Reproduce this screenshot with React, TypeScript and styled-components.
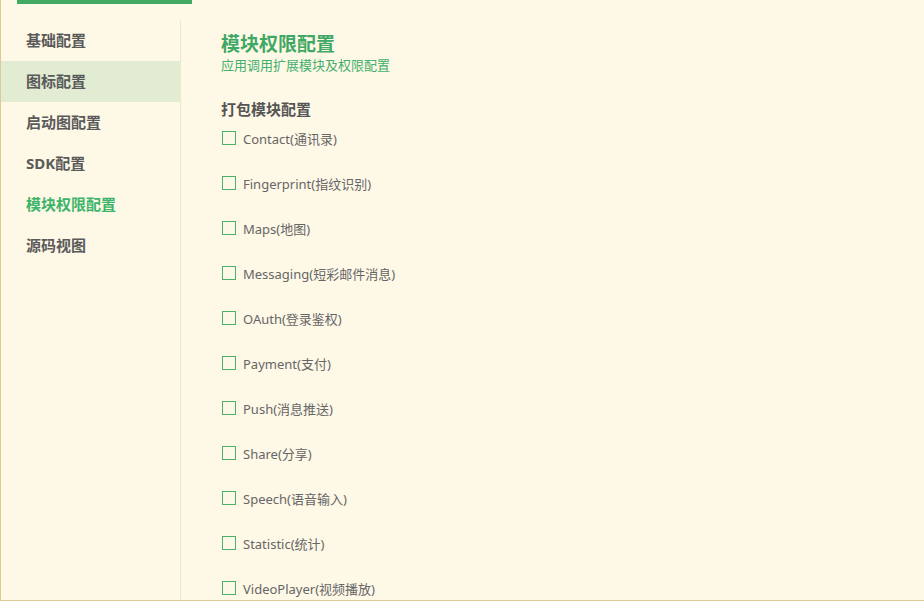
import React from "react";
import styled, { createGlobalStyle } from "styled-components";

const Global = createGlobalStyle`
  html, body { margin: 0; padding: 0; background: #fef8e6; }
  body { font-family: "Noto Sans", "Noto Sans CJK SC", sans-serif; }
  * { box-sizing: border-box; }
`;

const Page = styled.div`
  height: 601px;
  overflow: hidden;
  border-left: 1px solid #dccb93;
  border-bottom: 1px solid #dccb93;
  background: #fef8e6;
  display: flex;
  flex-direction: column;
`;

const TopBar = styled.div`
  height: 4px;
  overflow: hidden;
  display: flex;
  align-items: flex-end;
  padding-left: 16px;
  gap: 60px;
  flex-shrink: 0;
`;

const Tab = styled.div<{ $active?: boolean }>`
  width: ${(p) => (p.$active ? "175px" : "auto")};
  height: 30px;
  padding-top: 6px;
  line-height: 20px;
  font-size: 14px;
  text-align: center;
  color: ${(p) => (p.$active ? "#ffffff" : "#3daa66")};
  background: ${(p) => (p.$active ? "#42aa62" : "transparent")};
`;

const Body = styled.div`
  flex: 1;
  display: flex;
  margin-top: 16px;
  min-height: 0;
`;

const Sidebar = styled.nav`
  width: 180px;
  flex-shrink: 0;
  border-right: 1px solid #f1e6c6;
  display: flex;
  flex-direction: column;
`;

const NavItem = styled.div<{ $selected?: boolean; $current?: boolean }>`
  height: 41px;
  display: flex;
  align-items: center;
  padding: 0 0 2px 25px;
  font-size: 15px;
  font-weight: 700;
  color: ${(p) => (p.$current ? "#3cb46a" : "#5a5a5a")};
  background: ${(p) => (p.$selected ? "#e1ecd3" : "transparent")};
`;

const Content = styled.main`
  flex: 1;
  padding: 12px 0 0 40px;
  display: flex;
  flex-direction: column;
`;

const Title = styled.h1`
  margin: 0;
  font-size: 19px;
  line-height: 24px;
  font-weight: 700;
  color: #3fa865;
`;

const Subtitle = styled.div`
  margin-top: 1px;
  font-size: 13px;
  line-height: 16px;
  color: #42b06c;
`;

const SectionTitle = styled.h2`
  margin: 26px 0 0 0;
  font-size: 15px;
  line-height: 20px;
  font-weight: 700;
  color: #555;
`;

const OptionList = styled.div`
  display: flex;
  flex-direction: column;
  gap: 27px;
  margin-top: 10px;
`;

const Option = styled.label`
  display: flex;
  align-items: center;
  height: 18px;
  font-size: 13px;
  color: #666;
  gap: 7px;
`;

const Box = styled.span`
  width: 14px;
  height: 14px;
  border: 1px solid #4caf6a;
  background: transparent;
  flex-shrink: 0;
  margin-left: 1px;
`;

const navItems = ["基础配置", "图标配置", "启动图配置", "SDK配置", "模块权限配置", "源码视图"];
const modules = [
  "Contact(通讯录)",
  "Fingerprint(指纹识别)",
  "Maps(地图)",
  "Messaging(短彩邮件消息)",
  "OAuth(登录鉴权)",
  "Payment(支付)",
  "Push(消息推送)",
  "Share(分享)",
  "Speech(语音输入)",
  "Statistic(统计)",
  "VideoPlayer(视频播放)",
];

export default function App() {
  return (
    <>
      <Global />
      <Page>
        <TopBar>
          <Tab $active>App常用其它设置</Tab>
          <Tab>App常用其它设置</Tab>
        </TopBar>
        <Body>
          <Sidebar>
            {navItems.map((n, i) => (
              <NavItem key={n} $selected={i === 1} $current={i === 4}>
                {n}
              </NavItem>
            ))}
          </Sidebar>
          <Content>
            <Title>模块权限配置</Title>
            <Subtitle>应用调用扩展模块及权限配置</Subtitle>
            <SectionTitle>打包模块配置</SectionTitle>
            <OptionList>
              {modules.map((m) => (
                <Option key={m}>
                  <Box />
                  {m}
                </Option>
              ))}
            </OptionList>
          </Content>
        </Body>
      </Page>
    </>
  );
}
